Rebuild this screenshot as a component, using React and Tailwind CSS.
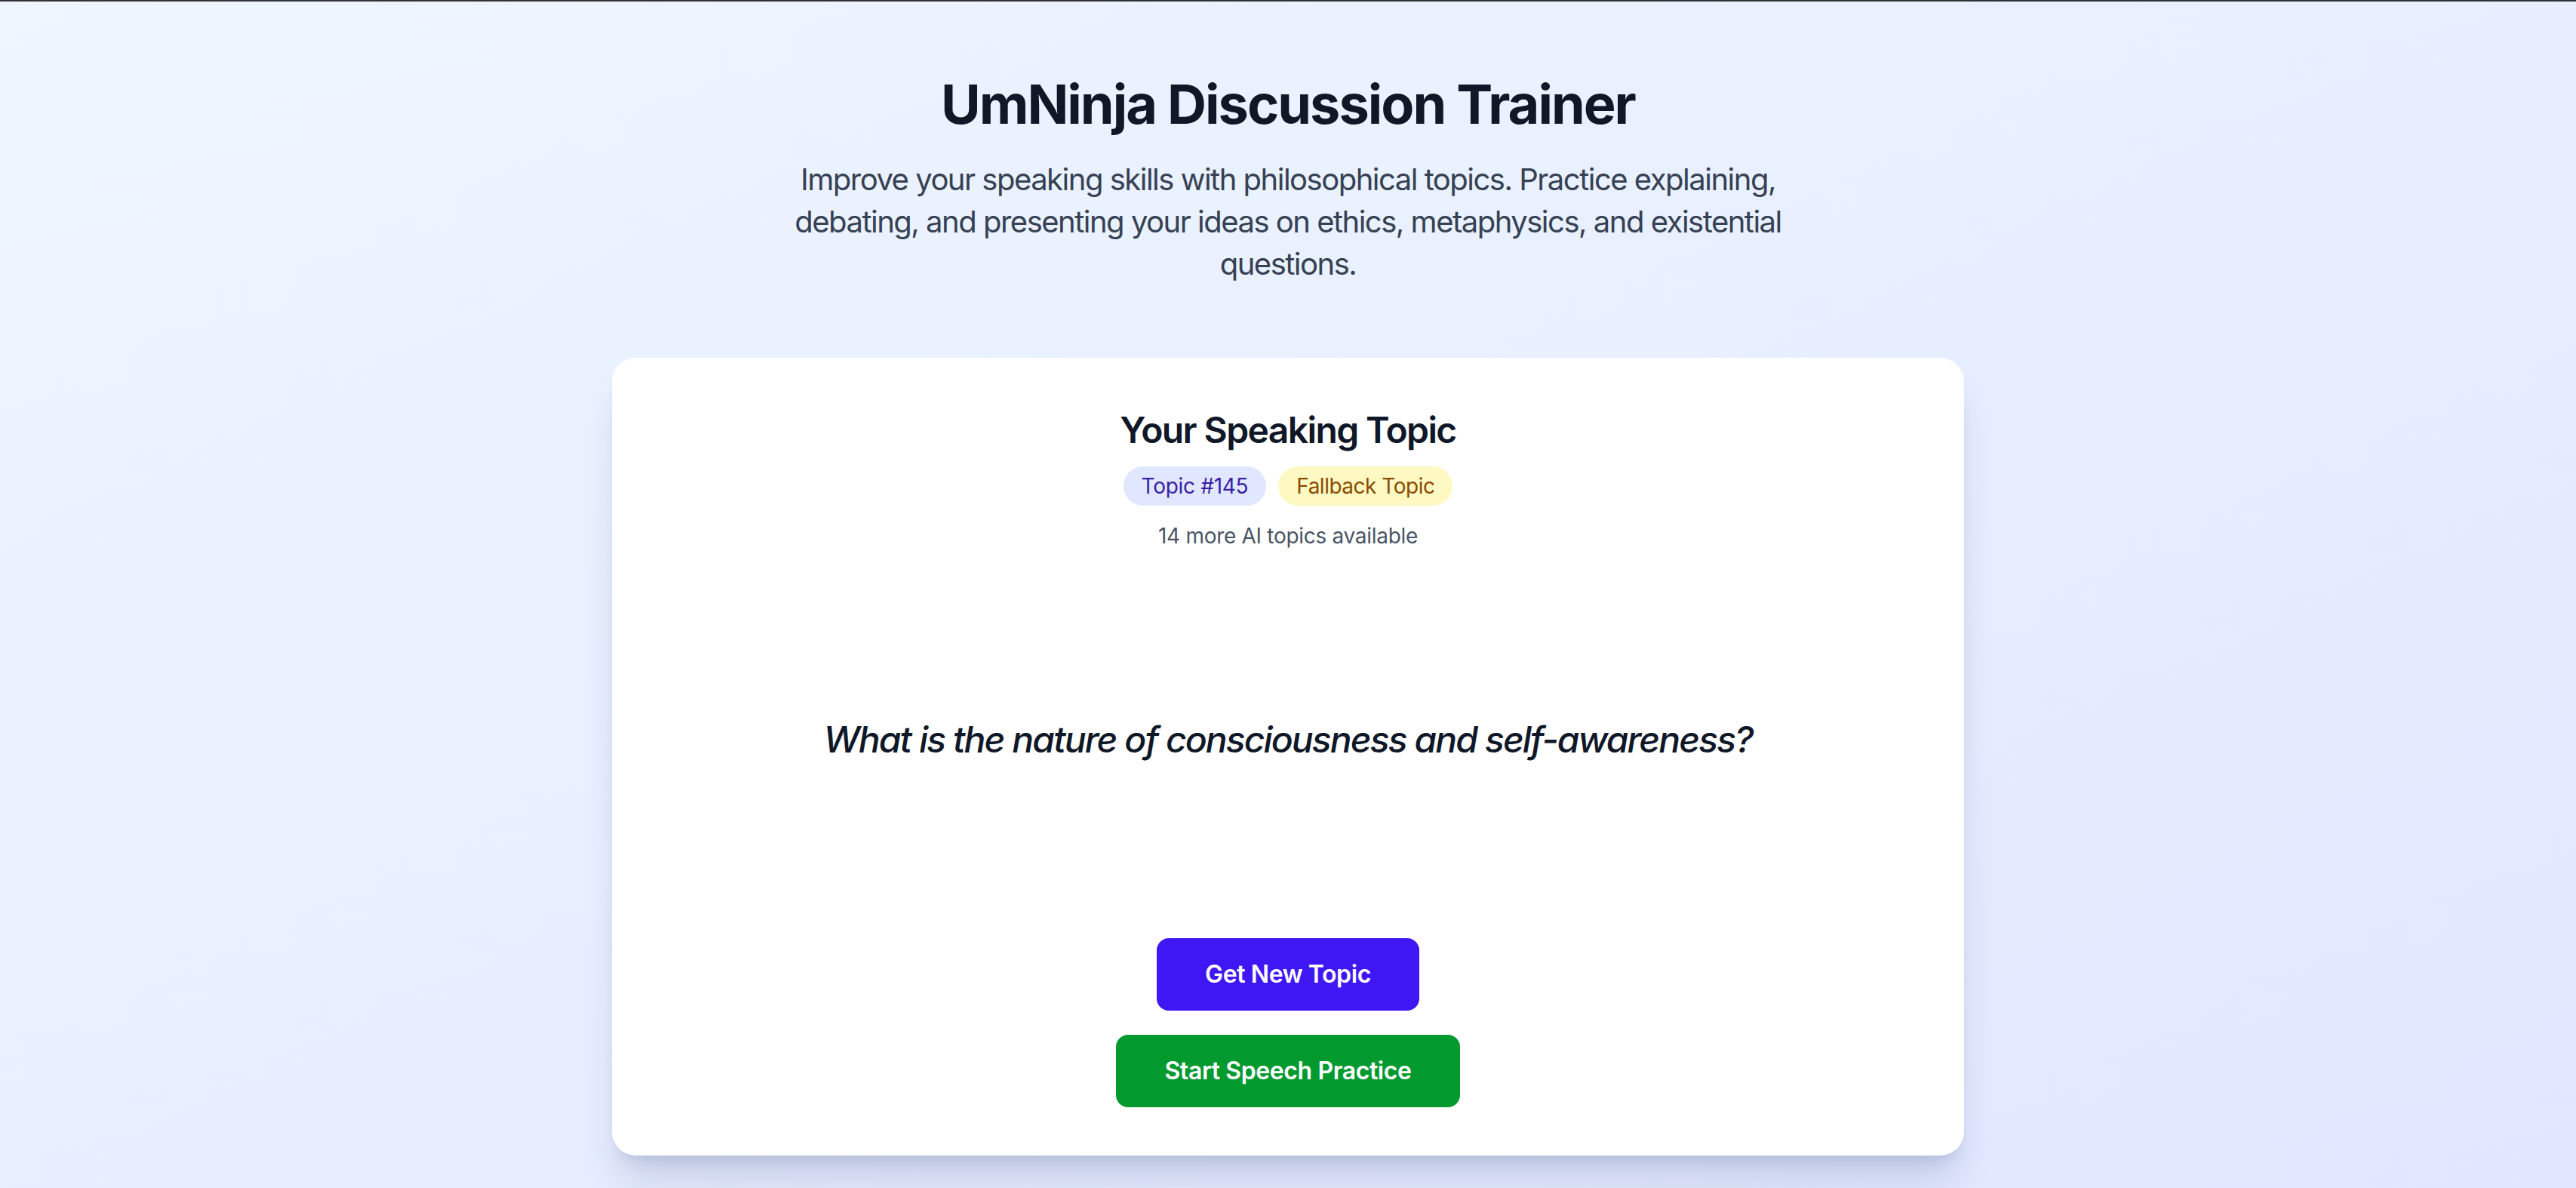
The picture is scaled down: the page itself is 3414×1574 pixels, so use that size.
import React, { useState } from 'react';

const topics = [
  'What is the nature of consciousness and self-awareness?',
  'Is free will compatible with a deterministic universe?',
  'Can moral truths exist independently of human minds?',
];

const App = () => {
  const [topicIndex, setTopicIndex] = useState(0);

  const handleNewTopic = () => {
    setTopicIndex((topicIndex + 1) % topics.length);
  };

  return (
    <div className="min-h-screen bg-linear-to-br from-blue-50 to-indigo-100 font-['Inter','Noto_Sans',sans-serif]">
      <div className="h-[2px] bg-[#303234]" />

      <div className="px-8 py-24">
        {/* Header */}
        <div className="mb-24 text-center">
          <h1 className="mb-8 text-[72px] font-bold leading-[80px] tracking-[-2px] text-gray-900">
            UmNinja Discussion Trainer
          </h1>
          <p className="mx-auto max-w-[1344px] text-[40px] leading-[56px] tracking-[-1.5px] text-gray-700">
            Improve your speaking skills with philosophical topics. Practice explaining, debating, and presenting your ideas on ethics, metaphysics, and existential questions.
          </p>
        </div>

        {/* Topic card */}
        <div className="mx-auto flex max-w-[1792px] flex-col rounded-[32px] bg-white p-16 shadow-[0_40px_50px_-10px_rgba(30,41,99,0.16),0_16px_20px_-12px_rgba(30,41,99,0.12)]">
          <div className="text-center">
            <h2 className="mb-4 text-[48px] font-semibold leading-[64px] tracking-[-1.6px] text-gray-900">Your Speaking Topic</h2>
            <div className="flex items-center justify-center gap-4">
              <span className="rounded-full bg-indigo-100 px-6 py-[6px] text-[28px] leading-[40px] tracking-[-0.3px] text-[#3a1fa6]">
                Topic #145
              </span>
              <span className="rounded-full bg-yellow-100 px-6 py-[6px] text-[28px] leading-[40px] tracking-[-0.5px] text-yellow-800">
                Fallback Topic
              </span>
            </div>
            <p className="mt-5 text-[28px] leading-[40px] tracking-[-0.3px] text-gray-600">14 more AI topics available</p>
          </div>

          {/* Question */}
          <div className="flex h-[513px] items-center justify-center pb-[14px]">
            <p className="text-center text-[48px] font-medium italic leading-[64px] tracking-[-1.9px] text-gray-900">
              {topics[topicIndex]}
            </p>
          </div>

          {/* Actions */}
          <div className="flex flex-col items-center gap-8">
            <button
              onClick={handleNewTopic}
              className="rounded-[16px] bg-[#3f17f4] px-16 py-6 text-[32px] font-semibold leading-[48px] tracking-[-0.4px] text-white hover:bg-[#3512d8]"
            >
              Get New Topic
            </button>
            <button className="rounded-[16px] bg-[#02992f] px-16 py-6 text-[32px] font-semibold leading-[48px] tracking-[-0.4px] text-white hover:bg-[#028a2a]">
              Start Speech Practice
            </button>
          </div>
        </div>
      </div>
    </div>
  );
};

export default App;
